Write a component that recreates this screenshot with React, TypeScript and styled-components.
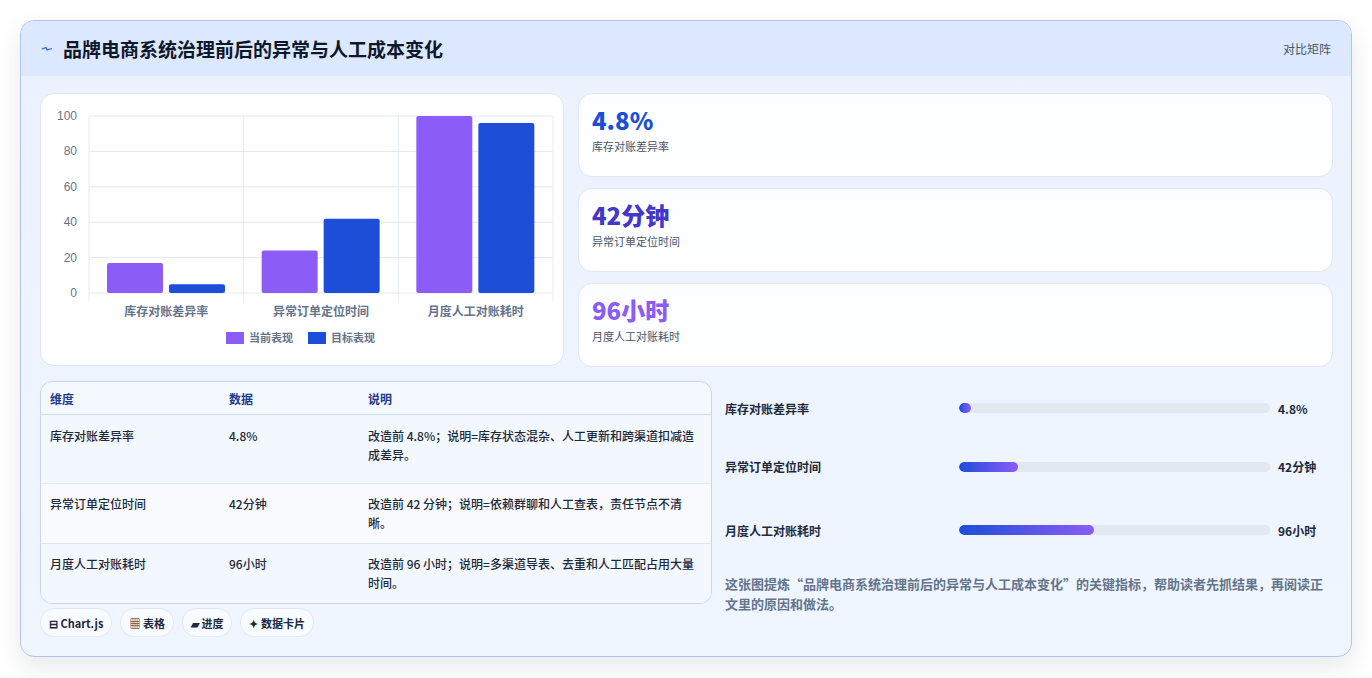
import React from 'react';
import styled, { createGlobalStyle } from 'styled-components';

const GlobalStyle = createGlobalStyle`
  body {
    margin: 0;
    background: #ffffff;
    font-family: "Noto Sans CJK SC", "Noto Sans", sans-serif;
  }
`;

const bars = [
  { label: '库存对账差异率', current: 17, target: 5 },
  { label: '异常订单定位时间', current: 24, target: 42 },
  { label: '月度人工对账耗时', current: 100, target: 96 },
];

const kpis = [
  { value: '4.8%', label: '库存对账差异率', color: '#1d4ed8' },
  { value: '42分钟', label: '异常订单定位时间', color: '#4338ca' },
  { value: '96小时', label: '月度人工对账耗时', color: '#8b5cf6' },
];

const rows = [
  { dim: '库存对账差异率', data: '4.8%', note: '改造前 4.8%；说明=库存状态混杂、人工更新和跨渠道扣减造成差异。', tall: true },
  { dim: '异常订单定位时间', data: '42分钟', note: '改造前 42 分钟；说明=依赖群聊和人工查表，责任节点不清晰。' },
  { dim: '月度人工对账耗时', data: '96小时', note: '改造前 96 小时；说明=多渠道导表、去重和人工匹配占用大量时间。' },
];

const progress = [
  { label: '库存对账差异率', value: '4.8%', pct: 4 },
  { label: '异常订单定位时间', value: '42分钟', pct: 19 },
  { label: '月度人工对账耗时', value: '96小时', pct: 43.5 },
];

const Page = styled.div`
  padding: 20px;
`;

const Card = styled.div`
  width: 1332px;
  height: 637px;
  box-sizing: border-box;
  border: 1px solid #b4c3ec;
  border-radius: 14px;
  background: linear-gradient(180deg, #ebf2fe 0%, #eff6ff 100%);
  box-shadow: 0 10px 24px rgba(30, 41, 59, 0.1);
  overflow: hidden;
`;

const Header = styled.div`
  height: 55px;
  background: #dce8fe;
  display: flex;
  align-items: center;
  justify-content: space-between;
  padding: 0 20px 0 20px;
`;

const Title = styled.h1`
  margin: 0;
  font-size: 19px;
  font-weight: 700;
  color: #0f172a;
  display: flex;
  align-items: center;
  gap: 10px;
`;

const HeaderTag = styled.span`
  font-size: 12px;
  color: #475569;
`;

const Body = styled.div`
  padding: 17px 19px 0 19px;
  display: flex;
  flex-direction: column;
`;

const TopRow = styled.div`
  display: grid;
  grid-template-columns: 524px 755px;
  gap: 14px;
`;

const Panel = styled.div`
  background: #ffffff;
  border: 1px solid #dfe7f5;
  border-radius: 14px;
`;

const ChartPanel = styled(Panel)`
  height: 273px;
  box-sizing: border-box;
  overflow: hidden;
`;

const KpiList = styled.div`
  display: flex;
  flex-direction: column;
  gap: 11px;
`;

const Kpi = styled(Panel)`
  height: 84px;
  box-sizing: border-box;
  padding: 10px 13px;
  background: linear-gradient(180deg, #fbfdff 0%, #ffffff 100%);
`;

const KpiValue = styled.div<{ $color: string }>`
  font-size: 24px;
  font-weight: 800;
  line-height: 32px;
  color: ${(p) => p.$color};
`;

const KpiLabel = styled.div`
  font-size: 11px;
  color: #475569;
  margin-top: 2px;
`;

const BottomRow = styled.div`
  display: grid;
  grid-template-columns: 672px 1fr;
  gap: 13px;
  margin-top: 14px;
`;

const Table = styled.table`
  width: 100%;
  border-collapse: separate;
  border-spacing: 0;
  border: 1px solid #c9d6ee;
  border-radius: 12px;
  overflow: hidden;
  font-size: 12px;
  background: #f4f8ff;
`;

const Th = styled.th<{ $w?: number }>`
  text-align: left;
  font-weight: 700;
  color: #1e3a8a;
  height: 32px;
  padding: 0 9px;
  border-bottom: 1px solid #cfd9ec;
  width: ${(p) => (p.$w ? `${p.$w}px` : 'auto')};
`;

const Tr = styled.tr<{ $alt?: boolean }>`
  background: ${(p) => (p.$alt ? '#f8fafd' : '#f3f7fe')};
`;

const Td = styled.td<{ $tall?: boolean; $last?: boolean }>`
  vertical-align: top;
  color: #1e293b;
  font-weight: 500;
  padding: ${(p) => (p.$tall ? '11px 9px 19px' : '10px 9px 11px')};
  line-height: 19px;
  border-bottom: ${(p) => (p.$last ? 'none' : '1px solid #e2e8f0')};
`;

const Side = styled.div`
  display: flex;
  flex-direction: column;
`;

const ProgressRow = styled.div`
  display: grid;
  grid-template-columns: 226px 311px 1fr;
  align-items: center;
  gap: 8px;
  height: 63.5px;
  font-size: 12px;
  font-weight: 700;
  color: #1e293b;
  &:first-child {
    height: 54px;
  }
`;

const Track = styled.div`
  height: 10px;
  border-radius: 5px;
  background: #e2e8f0;
  overflow: hidden;
`;

const Fill = styled.div`
  height: 100%;
  min-width: 10px;
  border-radius: 5px;
  background: linear-gradient(90deg, #1d4ed8 0%, #8b5cf6 100%);
`;

const Summary = styled.p`
  margin: 12px 0 0;
  font-size: 13px;
  line-height: 20px;
  font-weight: 600;
  color: #64748b;
`;

const Chips = styled.div`
  display: flex;
  gap: 8px;
  margin-top: -6px;
`;

const Chip = styled.span`
  height: 27px;
  padding: 0 8px;
  border-radius: 14px;
  background: #f8fbff;
  border: 1px solid #e2e8f5;
  font-size: 11px;
  font-weight: 700;
  color: #1e293b;
  display: inline-flex;
  align-items: center;
  gap: 3px;
`;

const Bolt = () => (
  <svg width="12" height="12" viewBox="0 0 12 12">
    <path d="M1 6 L5 4.5 L6 7 L11 5.5" fill="none" stroke="#2563eb" strokeWidth="1.3" />
  </svg>
);

const Chart = () => {
  const x0 = 48;
  const x1 = 512;
  const yTop = 22;
  const yBot = 199;
  const catW = (x1 - x0) / 3;
  const h = (v: number) => ((yBot - yTop) * v) / 100;
  return (
    <svg width="524" height="273" viewBox="0 0 524 273">
      {[0, 20, 40, 60, 80, 100].map((t) => {
        const y = yBot - h(t);
        return (
          <g key={t}>
            <line x1={x0} x2={x1} y1={y} y2={y} stroke="#e2e8f0" />
            <text x={x0 - 12} y={y + 4} textAnchor="end" fontSize="12" fill="#64748b" fontFamily="Liberation Sans, sans-serif">
              {t}
            </text>
          </g>
        );
      })}
      {[0, 1, 2, 3].map((i) => (
        <line key={i} x1={x0 + catW * i} x2={x0 + catW * i} y1={yTop} y2={yBot + 8} stroke="#e5eaf2" />
      ))}
      {bars.map((b, i) => {
        const cx = x0 + catW * i;
        return (
          <g key={b.label}>
            <rect x={cx + 18} y={yBot - h(b.current)} width="56" height={h(b.current)} rx="2" fill="#8b5cf6" />
            <rect x={cx + 80} y={yBot - h(b.target)} width="56" height={h(b.target)} rx="2" fill="#1d4ed8" />
            <text x={cx + catW / 2} y={222} textAnchor="middle" fontSize="12" fill="#64748b" fontWeight="600">
              {b.label}
            </text>
          </g>
        );
      })}
      <rect x="185" y="238" width="18" height="12" fill="#8b5cf6" />
      <text x="208" y="248" fontSize="11" fill="#64748b" fontWeight="600">当前表现</text>
      <rect x="267" y="238" width="18" height="12" fill="#1d4ed8" />
      <text x="290" y="248" fontSize="11" fill="#64748b" fontWeight="600">目标表现</text>
    </svg>
  );
};

const App: React.FC = () => (
  <>
    <GlobalStyle />
    <Page>
      <Card>
        <Header>
          <Title>
            <Bolt />
            品牌电商系统治理前后的异常与人工成本变化
          </Title>
          <HeaderTag>对比矩阵</HeaderTag>
        </Header>
        <Body>
          <TopRow>
            <ChartPanel>
              <Chart />
            </ChartPanel>
            <KpiList>
              {kpis.map((k) => (
                <Kpi key={k.label}>
                  <KpiValue $color={k.color}>{k.value}</KpiValue>
                  <KpiLabel>{k.label}</KpiLabel>
                </Kpi>
              ))}
            </KpiList>
          </TopRow>
          <BottomRow>
            <div>
              <Table>
                <thead>
                  <tr>
                    <Th $w={161}>维度</Th>
                    <Th $w={121}>数据</Th>
                    <Th>说明</Th>
                  </tr>
                </thead>
                <tbody>
                  {rows.map((r, i) => (
                    <Tr key={r.dim} $alt={i === 1}>
                      <Td $tall={r.tall} $last={i === rows.length - 1}>{r.dim}</Td>
                      <Td $tall={r.tall} $last={i === rows.length - 1}>{r.data}</Td>
                      <Td $tall={r.tall} $last={i === rows.length - 1}>{r.note}</Td>
                    </Tr>
                  ))}
                </tbody>
              </Table>
            </div>
            <Side>
              {progress.map((p) => (
                <ProgressRow key={p.label}>
                  <span>{p.label}</span>
                  <Track>
                    <Fill style={{ width: `${p.pct}%` }} />
                  </Track>
                  <span>{p.value}</span>
                </ProgressRow>
              ))}
              <Summary>
                这张图提炼“品牌电商系统治理前后的异常与人工成本变化”的关键指标，帮助读者先抓结果，再阅读正文里的原因和做法。
              </Summary>
            </Side>
          </BottomRow>
          <Chips>
            <Chip>⊟ Chart.js</Chip>
            <Chip>▦ 表格</Chip>
            <Chip>▰ 进度</Chip>
            <Chip>✦ 数据卡片</Chip>
          </Chips>
        </Body>
      </Card>
    </Page>
  </>
);

export default App;
